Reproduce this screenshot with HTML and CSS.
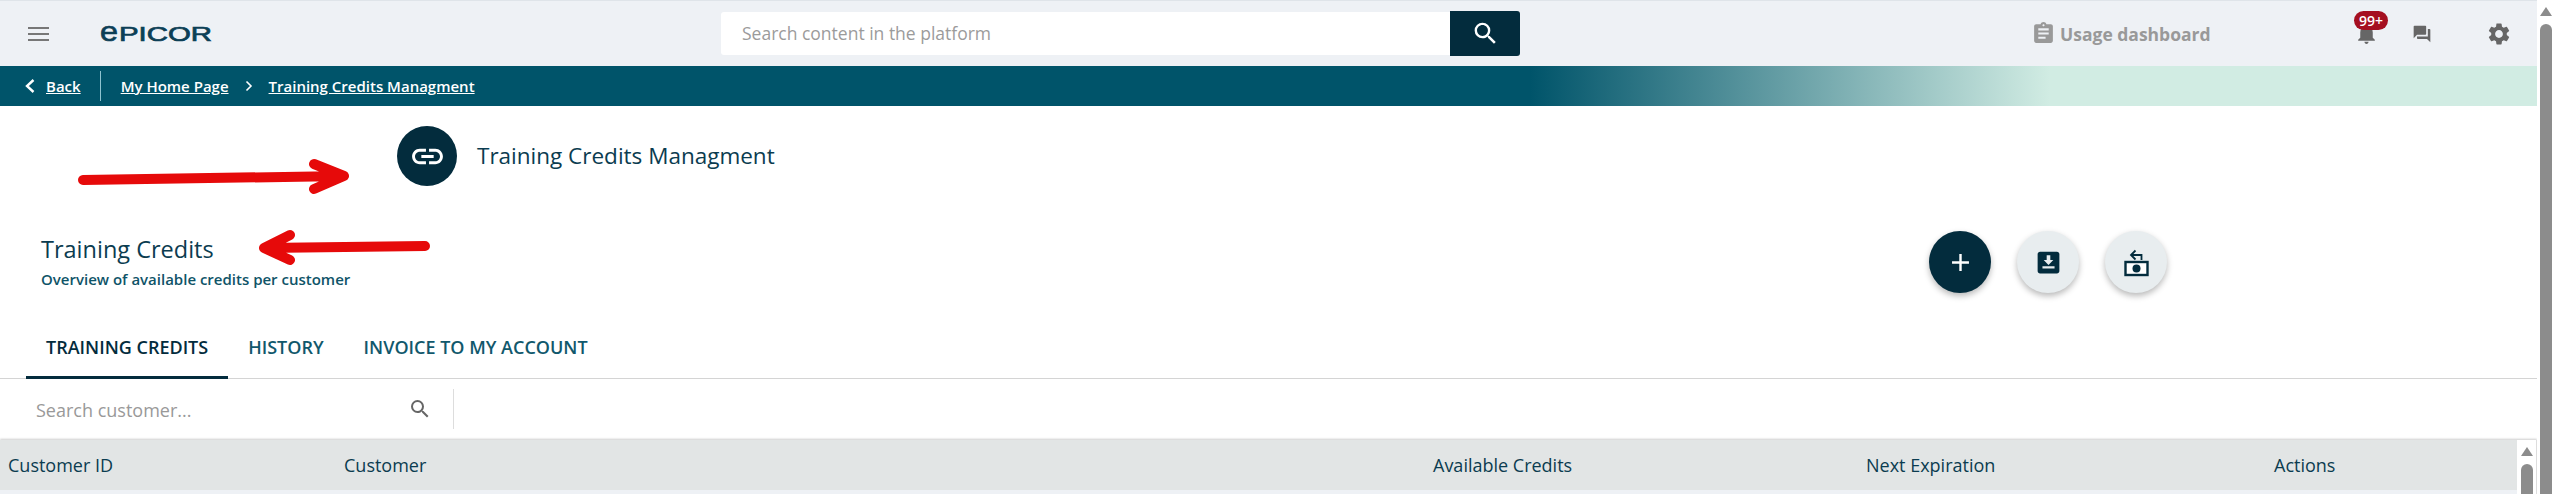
FILE: index.html
```html
<!DOCTYPE html>
<html lang="en">
<head>
    <meta charset="UTF-8">
    <title>Training Credits Managment</title>
    <link rel="stylesheet" href="styles.css">
</head>
<body>
<div class="page">
    <div class="main">
        <div class="top-bar">
            <div class="brand">
                <svg class="menu-icon" width="21" height="14" viewBox="0 0 21 14"><path d="M0 1h21M0 7h21M0 13h21" stroke="#777" stroke-width="2"/></svg>
                <svg class="logo" width="112" height="36" viewBox="0 0 112 36">
                    <text class="logo-text" x="0" y="25" textLength="18" lengthAdjust="spacingAndGlyphs" font-size="28">e</text>
                    <text class="logo-text" x="19" y="25" textLength="93" lengthAdjust="spacingAndGlyphs" font-size="21">PICOR</text>
                </svg>
            </div>
            <div class="global-search">
                <div class="global-input">Search content in the platform</div>
                <div class="global-btn">
                    <svg width="29" height="29" viewBox="0 0 24 24"><path fill="#fff" d="M15.5 14h-.79l-.28-.27A6.47 6.47 0 0 0 16 9.5 6.5 6.5 0 1 0 9.5 16c1.61 0 3.09-.59 4.23-1.57l.27.28v.79l5 4.99L20.49 19l-4.99-5zm-6 0C7.01 14 5 11.99 5 9.5S7.01 5 9.5 5 14 7.01 14 9.5 11.99 14 9.5 14z"/></svg>
                </div>
            </div>
            <div class="top-actions">
                <div class="usage">
                    <svg width="25" height="25" viewBox="0 0 24 24"><path fill="#999" d="M19 3h-4.18C14.4 1.84 13.3 1 12 1s-2.4.84-2.82 2H5c-1.1 0-2 .9-2 2v14c0 1.1.9 2 2 2h14c1.1 0 2-.9 2-2V5c0-1.1-.9-2-2-2zm-7 0c.55 0 1 .45 1 1s-.45 1-1 1-1-.45-1-1 .45-1 1-1zm2 14H7v-2h7v2zm3-4H7v-2h10v2zm0-4H7V7h10v2z"/></svg>
                    <span>Usage dashboard</span>
                </div>
                <div class="notify">
                    <svg width="25" height="25" viewBox="0 0 24 24"><path fill="#666" d="M12 22c1.1 0 2-.9 2-2h-4c0 1.1.9 2 2 2zm6-6v-5c0-3.07-1.63-5.64-4.5-6.32V4c0-.83-.67-1.5-1.5-1.5s-1.5.67-1.5 1.5v.68C7.64 5.36 6 7.92 6 11v5l-2 2v1h16v-1l-2-2z"/></svg>
                    <span class="badge">99+</span>
                </div>
                <svg class="chat-icon" width="20" height="20" viewBox="0 0 24 24"><path fill="#666" d="M21 6h-2v9H6v2c0 .55.45 1 1 1h11l4 4V7c0-.55-.45-1-1-1zm-4 6V3c0-.55-.45-1-1-1H3c-.55 0-1 .45-1 1v14l4-4h10c.55 0 1-.45 1-1z"/></svg>
                <svg class="gear-icon" width="26" height="26" viewBox="0 0 24 24"><path fill="#666" d="M19.14 12.94c.04-.3.06-.61.06-.94 0-.32-.02-.64-.07-.94l2.03-1.58a.49.49 0 0 0 .12-.61l-1.92-3.32a.488.488 0 0 0-.59-.22l-2.39.96c-.5-.38-1.03-.7-1.62-.94l-.36-2.54a.484.484 0 0 0-.48-.41h-3.84c-.24 0-.43.17-.47.41l-.36 2.54c-.59.24-1.13.57-1.62.94l-2.39-.96c-.22-.08-.47 0-.59.22L2.74 8.87c-.12.21-.08.47.12.61l2.03 1.58c-.05.3-.09.63-.09.94s.02.64.07.94l-2.03 1.58a.49.49 0 0 0-.12.61l1.92 3.32c.12.22.37.29.59.22l2.39-.96c.5.38 1.03.7 1.62.94l.36 2.54c.05.24.24.41.48.41h3.84c.24 0 .44-.17.47-.41l.36-2.54c.59-.24 1.13-.56 1.62-.94l2.39.96c.22.08.47 0 .59-.22l1.92-3.32c.12-.22.07-.47-.12-.61l-2.01-1.58zM12 15.6c-1.98 0-3.6-1.62-3.6-3.6s1.62-3.6 3.6-3.6 3.6 1.62 3.6 3.6-1.62 3.6-3.6 3.6z"/></svg>
            </div>
        </div>

        <div class="crumb-bar">
            <svg class="crumb-back" width="12" height="16" viewBox="0 0 12 16"><path d="M9.500 2 3 8l6.500 6" fill="none" stroke="#fff" stroke-width="2.400"/></svg>
            <a class="crumb back-link">Back</a>
            <span class="crumb-divider"></span>
            <a class="crumb">My Home Page</a>
            <svg class="crumb-sep" width="8" height="12" viewBox="0 0 8 12"><path d="M1.500 1.500 6 6l-4.500 4.500" fill="none" stroke="#fff" stroke-width="1.600"/></svg>
            <a class="crumb">Training Credits Managment</a>
        </div>

        <div class="page-title">
            <div class="title-circle">
                <svg width="37" height="37" viewBox="0 0 24 24"><path fill="#fff" d="M3.900 12c0-1.710 1.390-3.100 3.100-3.100h4V7H7c-2.760 0-5 2.240-5 5s2.240 5 5 5h4v-1.900H7c-1.710 0-3.100-1.390-3.100-3.100zM8 13h8v-2H8v2zm9-6h-4v1.900h4c1.710 0 3.100 1.390 3.100 3.100s-1.390 3.100-3.100 3.100h-4V17h4c2.760 0 5-2.240 5-5s-2.240-5-5-5z"/></svg>
            </div>
            <h1>Training Credits Managment</h1>
        </div>

        <div class="section-head">
            <div class="section-text">
                <h2>Training Credits</h2>
                <p>Overview of available credits per customer</p>
            </div>
            <div class="fab-group">
                <div class="fab fab-dark">
                    <svg width="29" height="29" viewBox="0 0 24 24"><path fill="#fff" d="M19 13h-6v6h-2v-6H5v-2h6V5h2v6h6v2z"/></svg>
                </div>
                <div class="fab">
                    <svg width="29" height="29" viewBox="0 0 24 24"><path fill="#032c3d" d="M19 3H5c-1.100 0-2 .9-2 2v14c0 1.100.9 2 2 2h14c1.100 0 2-.9 2-2V5c0-1.100-.9-2-2-2zm-2 14H7v-2h10v2zm-5-3-4-4h2.500V6h3v4H16l-4 4z"/></svg>
                </div>
                <div class="fab">
                    <svg width="30" height="30" viewBox="0 0 30 30">
                        <path fill="none" stroke="#032c3d" stroke-width="1.800" d="M20.500 13V8H10.500M14.500 3.500l-4.500 4.500 4.500 4.500"/>
                        <rect x="4.500" y="15" width="22" height="13" fill="#fff" stroke="#032c3d" stroke-width="2.400"/>
                        <circle cx="15.500" cy="21.500" r="4" fill="#032c3d"/>
                    </svg>
                </div>
            </div>
        </div>

        <div class="tabs">
            <div class="tab active">TRAINING CREDITS</div>
            <div class="tab">HISTORY</div>
            <div class="tab">INVOICE TO MY ACCOUNT</div>
        </div>

        <div class="filter-bar">
            <div class="filter-search">
                <span>Search customer...</span>
                <svg width="24" height="24" viewBox="0 0 24 24"><path fill="#666" d="M15.500 14h-.79l-.28-.27A6.470 6.470 0 0 0 16 9.500 6.500 6.500 0 1 0 9.500 16c1.610 0 3.090-.59 4.230-1.570l.27.28v.79l5 4.990L20.490 19l-4.990-5zm-6 0C7.010 14 5 11.990 5 9.500S7.010 5 9.500 5 14 7.010 14 9.500 11.990 14 9.500 14z"/></svg>
            </div>
        </div>

        <div class="table-wrap">
            <div class="table-body">
                <div class="table-head">
                    <div class="col col-id">Customer ID</div>
                    <div class="col col-customer">Customer</div>
                    <div class="col col-credits">Available Credits</div>
                    <div class="col col-expiry">Next Expiration</div>
                    <div class="col col-actions">Actions</div>
                </div>
                <div class="table-row"></div>
            </div>
            <div class="scrollbar inner-scroll"><span class="arrow"></span><span class="thumb"></span></div>
        </div>
    </div>
    <div class="scrollbar page-scroll"><span class="arrow"></span><span class="thumb"></span></div>
</div>

<!-- red annotation arrows drawn on top of the screenshot -->
<svg class="annotations" width="2555" height="494" viewBox="0 0 2555 494">
    <path d="M83 180 344 176M314 164 344 176 314 189" fill="none" stroke="#e60a0a" stroke-width="10" stroke-linecap="round" stroke-linejoin="round"/>
    <path d="M425 246 264 248M290 235 264 248 290 260" fill="none" stroke="#e60a0a" stroke-width="10" stroke-linecap="round" stroke-linejoin="round"/>
</svg>
</body>
</html>
```

FILE: styles.css
```css
* {
    box-sizing: border-box;
}

html, body {
    margin: 0;
    height: 494px;
    overflow: hidden;
    background: #fff;
}

body {
    font-family: "Open Sans", sans-serif;
    color: #0b3c50;
    position: relative;
}

.page {
    display: flex;
    height: 494px;
}

.main {
    flex: 1;
    min-width: 0;
}

/* top bar */
.top-bar {
    height: 66px;
    display: flex;
    align-items: center;
    background: #eef1f5;
    border-top: 1px solid #dfe4e9;
}

.brand {
    width: 721px;
    display: flex;
    align-items: center;
    padding-left: 28px;
    gap: 51px;
}

.logo-text {
    font-family: "Liberation Sans", sans-serif;
    fill: #0c3f56;
    stroke: #0c3f56;
    stroke-width: 0.7;
}

.global-search {
    width: 799px;
    height: 45px;
    display: flex;
    align-items: center;
}

.global-input {
    width: 729px;
    height: 43px;
    background: #fff;
    border-radius: 3px 0 0 3px;
    color: #9b9b9b;
    font-size: 17.5px;
    line-height: 43px;
    padding-left: 21px;
}

.global-btn {
    width: 70px;
    height: 45px;
    background: #032c3d;
    border-radius: 0 3px 3px 0;
    display: flex;
    align-items: center;
    justify-content: center;
}

.top-actions {
    flex: 1;
    display: flex;
    align-items: center;
    padding-left: 511px;
}

.usage {
    display: flex;
    align-items: center;
    gap: 4px;
    font-size: 17.5px;
    font-weight: 700;
    color: #999;
    width: 323px;
    white-space: nowrap;
}

.notify {
    position: relative;
    width: 25px;
    height: 25px;
}

.badge {
    position: absolute;
    top: -10px;
    left: 0;
    background: #a50f20;
    color: #fff;
    font-size: 14px;
    font-weight: 600;
    line-height: 19px;
    height: 19px;
    padding: 0 5px;
    border-radius: 10px;
}

.chat-icon {
    margin-left: 33px;
}

.gear-icon {
    margin-left: 54px;
}

/* breadcrumb */
.crumb-bar {
    height: 40px;
    display: flex;
    align-items: center;
    padding-left: 24px;
    background: linear-gradient(90deg, #00546a 0, #00546a 1530px, #d1ece3 2050px);
}

.crumb {
    color: #fff;
    font-size: 15px;
    font-weight: 600;
    text-decoration: underline;
}

.back-link {
    margin-left: 10px;
}

.crumb-divider {
    width: 1px;
    height: 30px;
    background: #8fc3cf;
    margin: 0 20px 0 19px;
}

.crumb-sep {
    margin: 0 16px;
}

/* page title */
.page-title {
    display: flex;
    align-items: center;
    height: 60px;
    margin-top: 20px;
    padding-left: 397px;
    gap: 20px;
}

.title-circle {
    width: 60px;
    height: 60px;
    border-radius: 50%;
    background: #032c3d;
    display: flex;
    align-items: center;
    justify-content: center;
}

h1 {
    margin: 0 0 2px;
    font-size: 22.5px;
    font-weight: 500;
}

/* section head */
.section-head {
    display: flex;
    justify-content: space-between;
    height: 77px;
    margin-top: 45px;
    padding-left: 41px;
    padding-right: 370px;
}

h2 {
    margin: 3px 0 0;
    font-size: 23.5px;
    font-weight: 500;
    line-height: 30px;
}

.section-text p {
    margin: 5px 0 0;
    font-size: 15px;
    font-weight: 600;
    line-height: 20px;
    color: #0f5468;
}

.fab-group {
    display: flex;
    gap: 26px;
}

.fab {
    width: 62px;
    height: 62px;
    border-radius: 50%;
    background: #e8edef;
    box-shadow: 0 3px 6px rgba(0, 0, 0, 0.28);
    display: flex;
    align-items: center;
    justify-content: center;
}

.fab-dark {
    background: #032c3d;
}

/* tabs */
.tabs {
    display: flex;
    height: 70px;
    padding-left: 26px;
    border-bottom: 1px solid #d4d4d4;
    margin-top: 1px;
}

.tab {
    padding: 0 20px;
    height: 70px;
    line-height: 76px;
    font-size: 18px;
    font-weight: 600;
    color: #11586c;
}

.tab.active {
    color: #032c3d;
    border-bottom: 3px solid #032c3d;
}

/* filter */
.filter-bar {
    height: 61px;
    padding-top: 10px;
}

.filter-search {
    width: 454px;
    height: 40px;
    padding: 0 21px 0 36px;
    display: flex;
    align-items: center;
    justify-content: space-between;
    border-right: 1px solid #ddd;
    color: #999;
    font-size: 18px;
}

.filter-search span {
    padding-top: 2px;
}

/* table */
.table-wrap {
    display: flex;
    height: 54px;
    box-shadow: 0 -1px 2px rgba(0, 0, 0, 0.2);
}

.table-body {
    flex: 1;
}

.table-head {
    height: 50px;
    display: flex;
    align-items: center;
    background: #e2e5e5;
    font-size: 18px;
    font-weight: 500;
}

.table-row {
    height: 4px;
    background: #eef1f5;
}

.col-id {
    width: 344px;
    padding-left: 8px;
}

.col-customer {
    width: 1089px;
}

.col-credits {
    width: 433px;
}

.col-expiry {
    width: 408px;
}

/* scrollbars */
.scrollbar {
    display: flex;
    flex-direction: column;
    align-items: center;
    width: 18px;
    background: #fff;
    padding-top: 7px;
}

.inner-scroll {
    width: 20px;
    border-right: 1px solid #ddd;
}

.arrow {
    width: 0;
    height: 0;
    border-left: 6.5px solid transparent;
    border-right: 6.5px solid transparent;
    border-bottom: 9px solid #8c8c8c;
}

.thumb {
    flex: 1;
    width: 12px;
    margin-top: 8px;
    background: #8c8c8c;
    border-radius: 6px 6px 0 0;
}

/* annotation layer */
.annotations {
    position: absolute;
    top: 0;
    left: 0;
    pointer-events: none;
}
```
